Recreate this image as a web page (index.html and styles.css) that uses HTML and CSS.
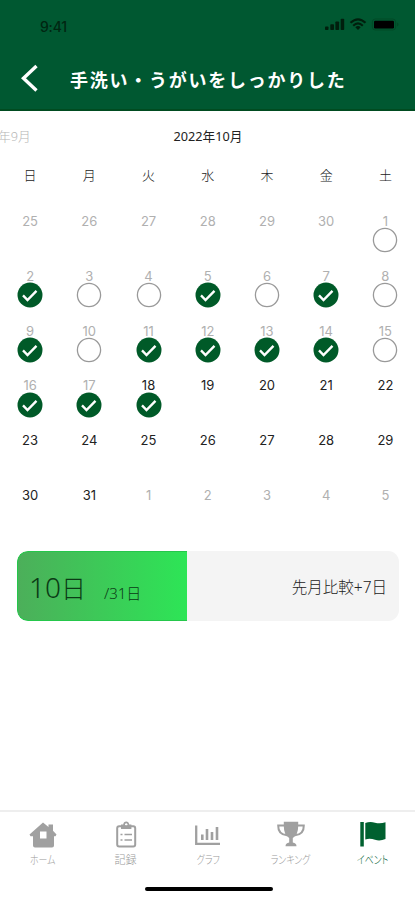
FILE: index.html
```html
<!DOCTYPE html>
<html lang="ja">
<head>
<meta charset="utf-8">
<title>手洗い・うがいをしっかりした</title>
<link rel="stylesheet" href="styles.css">
</head>
<body>
<div class="app">
  <header class="header">
    <div class="status">
      <span class="time">9:41</span>
      <svg class="status-icons" width="78" height="16" viewBox="0 0 78 16">
        <g fill="#001f0d"><rect x="2" y="9.5" width="3.5" height="3.5" rx=".8"/><rect x="7.3" y="7.3" width="3.7" height="5.7" rx=".8"/><rect x="12.4" y="4.5" width="3.7" height="8.5" rx=".8"/><rect x="17.7" y="1.8" width="3.5" height="11.2" rx=".8"/></g>
        <g fill="none" stroke="#001f0d" stroke-width="2.2"><path d="M27.5 5.8Q35 -1.2 42.5 5.8"/><path d="M30.2 8.7Q35 4.2 39.8 8.7"/></g>
        <path fill="#001f0d" d="M32.3 10.2Q35 7.8 37.7 10.2L35 13z"/>
        <rect x="49.3" y="2" width="23.4" height="11" rx="3" fill="none" stroke="#004a27"/><rect x="51" y="3.7" width="20" height="7.8" rx="1.2" fill="#000"/><path d="M74 5.5v4q1.5-.5 1.5-2t-1.5-2z" fill="#004a27"/>
      </svg>
    </div>
    <div class="title-row">
      <svg class="back" width="20" height="30" viewBox="0 0 20 30" fill="none" stroke="#fff" stroke-width="3.4"><path d="M17.5 3L4.5 15.2L17.5 27.4"/></svg>
      <h1>手洗い・うがいをしっかりした</h1>
    </div>
  </header>
  <main>
    <div class="months"><span class="prev">年9月</span><span class="current">2022年10月</span><span></span></div>
    <div class="grid weekdays"><span>日</span><span>月</span><span>火</span><span>水</span><span>木</span><span>金</span><span>土</span></div>
    <div class="grid days" id="days"></div>
    <section class="summary">
      <div class="progress"><span class="count">10<span class="unit">日</span></span><span class="total">/31日</span></div>
      <span class="compare">先月比較+7日</span>
    </section>
  </main>
  <nav class="tabs">
    <div class="tab">
      <svg width="30" height="28" viewBox="0 0 30 28"><path fill="#a0a0a0" fill-rule="evenodd" d="M15 1.5L20.5 6V3.5H25V9.8L28.5 13.5L27.5 15.2H26V24.5Q26 26.5 24 26.5H7Q5 26.5 5 24.5V15.2H2.5L1.5 13.5ZM12 10.5V17.5H18.5V10.5Z"/></svg>
      <span class="kana">ホーム</span>
    </div>
    <div class="tab">
      <svg width="30" height="28" viewBox="0 0 30 28"><rect x="6.2" y="5.2" width="18" height="20.3" rx="2" fill="none" stroke="#a0a0a0" stroke-width="2"/><path fill="#a0a0a0" fill-rule="evenodd" d="M10 8V3.5H12.2Q12.6 .5 15.2 .5T18.2 3.5H20.4V8ZM15.2 2.3a1.3 1.3 0 1 0 .1 0z"/><path d="M9.5 13.5h2M13.5 13.5h7.5M9.5 19h2M13.5 19h7.5" stroke="#a0a0a0" stroke-width="1.7"/></svg>
      <span>記録</span>
    </div>
    <div class="tab">
      <svg width="30" height="28" viewBox="0 0 30 28" fill="none" stroke="#a0a0a0"><path d="M3.2 4.5V22.8H27" stroke-width="2.3"/><path d="M9.3 13.5V19M14 8V19M19 11V19M24 6V19" stroke-width="2.6"/></svg>
      <span class="kana">グラフ</span>
    </div>
    <div class="tab">
      <svg width="30" height="28" viewBox="0 0 30 28"><path d="M8 4.5H2.2Q2 13.5 11 14.2M22 4.5H27.8Q28 13.5 19 14.2" fill="none" stroke="#a0a0a0" stroke-width="2"/><path d="M7.8 .8H22.2V5Q22.2 14 16.8 17V21.5Q20.5 22 20.5 25.3H9.5Q9.5 22 13.2 21.5V17Q7.8 14 7.8 5Z" fill="#a0a0a0"/></svg>
      <span class="kana">ランキング</span>
    </div>
    <div class="tab active">
      <svg width="30" height="28" viewBox="0 0 30 28" fill="#00602f"><rect x="2.3" y="1" width="3.5" height="24.5"/><path d="M7.3 2Q12 .2 17 1.7T27.5 1.3V18Q22 20.5 17 18.8T7.3 18.5Z"/></svg>
      <span class="kana">イベント</span>
    </div>
  </nav>
  <div class="home-indicator"></div>
</div>
<script src="calendar.js"></script>
</body>
</html>
```
FILE: styles.css
```css
* { box-sizing: border-box; }
body { margin: 0; background: #fff; font-family: "Noto Sans CJK JP", sans-serif; color: #222; }
.app { width: 415px; height: 900px; display: flex; flex-direction: column; overflow: hidden; }
.header { height: 111px; background: #005831; border-bottom: 2px solid #004b20; flex: none; }
.status { display: flex; justify-content: space-between; align-items: center; height: 52px; padding: 2px 14px 0 40px; }
.time { font: 500 14px/20px Inter, sans-serif; color: #002611; letter-spacing: -.2px; }
.status-icons { margin-top: -5px; }
.title-row { display: flex; align-items: center; height: 52px; padding-left: 19px; }
.title-row h1 { margin: 1px 0 0 31px; font-size: 18px; line-height: 26px; font-weight: 700; letter-spacing: 1.75px; color: #fff; white-space: nowrap; }
.months { display: grid; grid-template-columns: 1fr auto 1fr; height: 50px; align-items: center; font-family: "Noto Sans", "Noto Sans CJK JP", sans-serif; font-size: 12.7px; line-height: 20px; }
.current { font-weight: 400; padding-left: 1px; }
.prev { color: #b5b5b5; font-weight: 300; margin-left: -2px; }
.grid { display: grid; grid-template-columns: repeat(7, 1fr); padding-left: .5px; text-align: center; }
.weekdays { height: 49px; padding-top: 4px; font-size: 13px; line-height: 20px; font-weight: 300; }
.days { grid-auto-rows: 54.75px; font: 400 13px/20px Inter, sans-serif; color: #222; height: 341px; padding-top: 1px; }
.day { display: flex; flex-direction: column; align-items: center; }
.muted { color: #b0b0b0; }
.day svg { flex: none; margin-top: -3.7px; }
.summary { display: flex; align-items: center; justify-content: space-between; width: 382px; height: 70px; margin: 0 0 0 17px; padding-right: 12px; border-radius: 11px; background: #f4f4f4; overflow: hidden; }
.progress { width: 170px; height: 70px; display: flex; align-items: baseline; padding: 15px 0 0 11px; border: 1px solid #25c74b; border-right-width: 0; border-radius: 11px 0 0 11px; background: linear-gradient(90deg, #4caf5a, #2de556); color: #0b3b16; font-family: "Noto Sans", "Noto Sans CJK JP", sans-serif; }
.count { font-size: 28px; line-height: 40px; font-weight: 300; }
.unit { font-size: 25px; }
.total { font-size: 15px; font-weight: 300; margin-left: 18px; position: relative; top: 1px; }
.compare { font-family: "Noto Sans", "Noto Sans CJK JP", sans-serif; font-size: 15.5px; font-weight: 300; line-height: 22px; padding-top: 2px; }
.tabs { margin-top: auto; flex: none; display: flex; justify-content: space-between; height: 70px; padding: 9px 11px 0 12px; border-top: 2px solid #eee; }
.tab { width: 62px; display: flex; flex-direction: column; align-items: center; font-size: 11px; line-height: 16px; font-weight: 300; color: #999; font-feature-settings: "palt"; white-space: nowrap; }
.tab span { margin-top: 2px; }
.kana { transform: scaleX(.81); }
.active { color: #00602f; }
.home-indicator { flex: none; width: 128px; height: 4px; border-radius: 2px; background: #000; margin: 7px auto 9px 145px; }
```
FILE: calendar.js
```javascript
const done = new Set([2, 5, 7, 9, 11, 12, 13, 14, 16, 17, 18]);
const check = '<svg width="26" height="26" viewBox="0 0 26 26"><circle cx="13" cy="13" r="12.5" fill="#005a28"/><path d="M6 13.4L10.5 18L19.5 8.8" fill="none" stroke="#fff" stroke-width="2.4"/></svg>';
const open = '<svg width="26" height="26" viewBox="0 0 26 26"><circle cx="13" cy="13" r="11.6" fill="#fff" stroke="#999" stroke-width="1.3"/></svg>';
let html = '';
for (let i = -5; i <= 36; i++) {
  const n = i < 1 ? i + 30 : i > 31 ? i - 31 : i;
  const muted = i < 18 || i > 31;
  const mark = done.has(i) ? check : i > 0 && i < 18 ? open : '';
  html += `<div class="day${muted ? ' muted' : ''}"><span>${n}</span>${mark}</div>`;
}
document.getElementById('days').innerHTML = html;
```
